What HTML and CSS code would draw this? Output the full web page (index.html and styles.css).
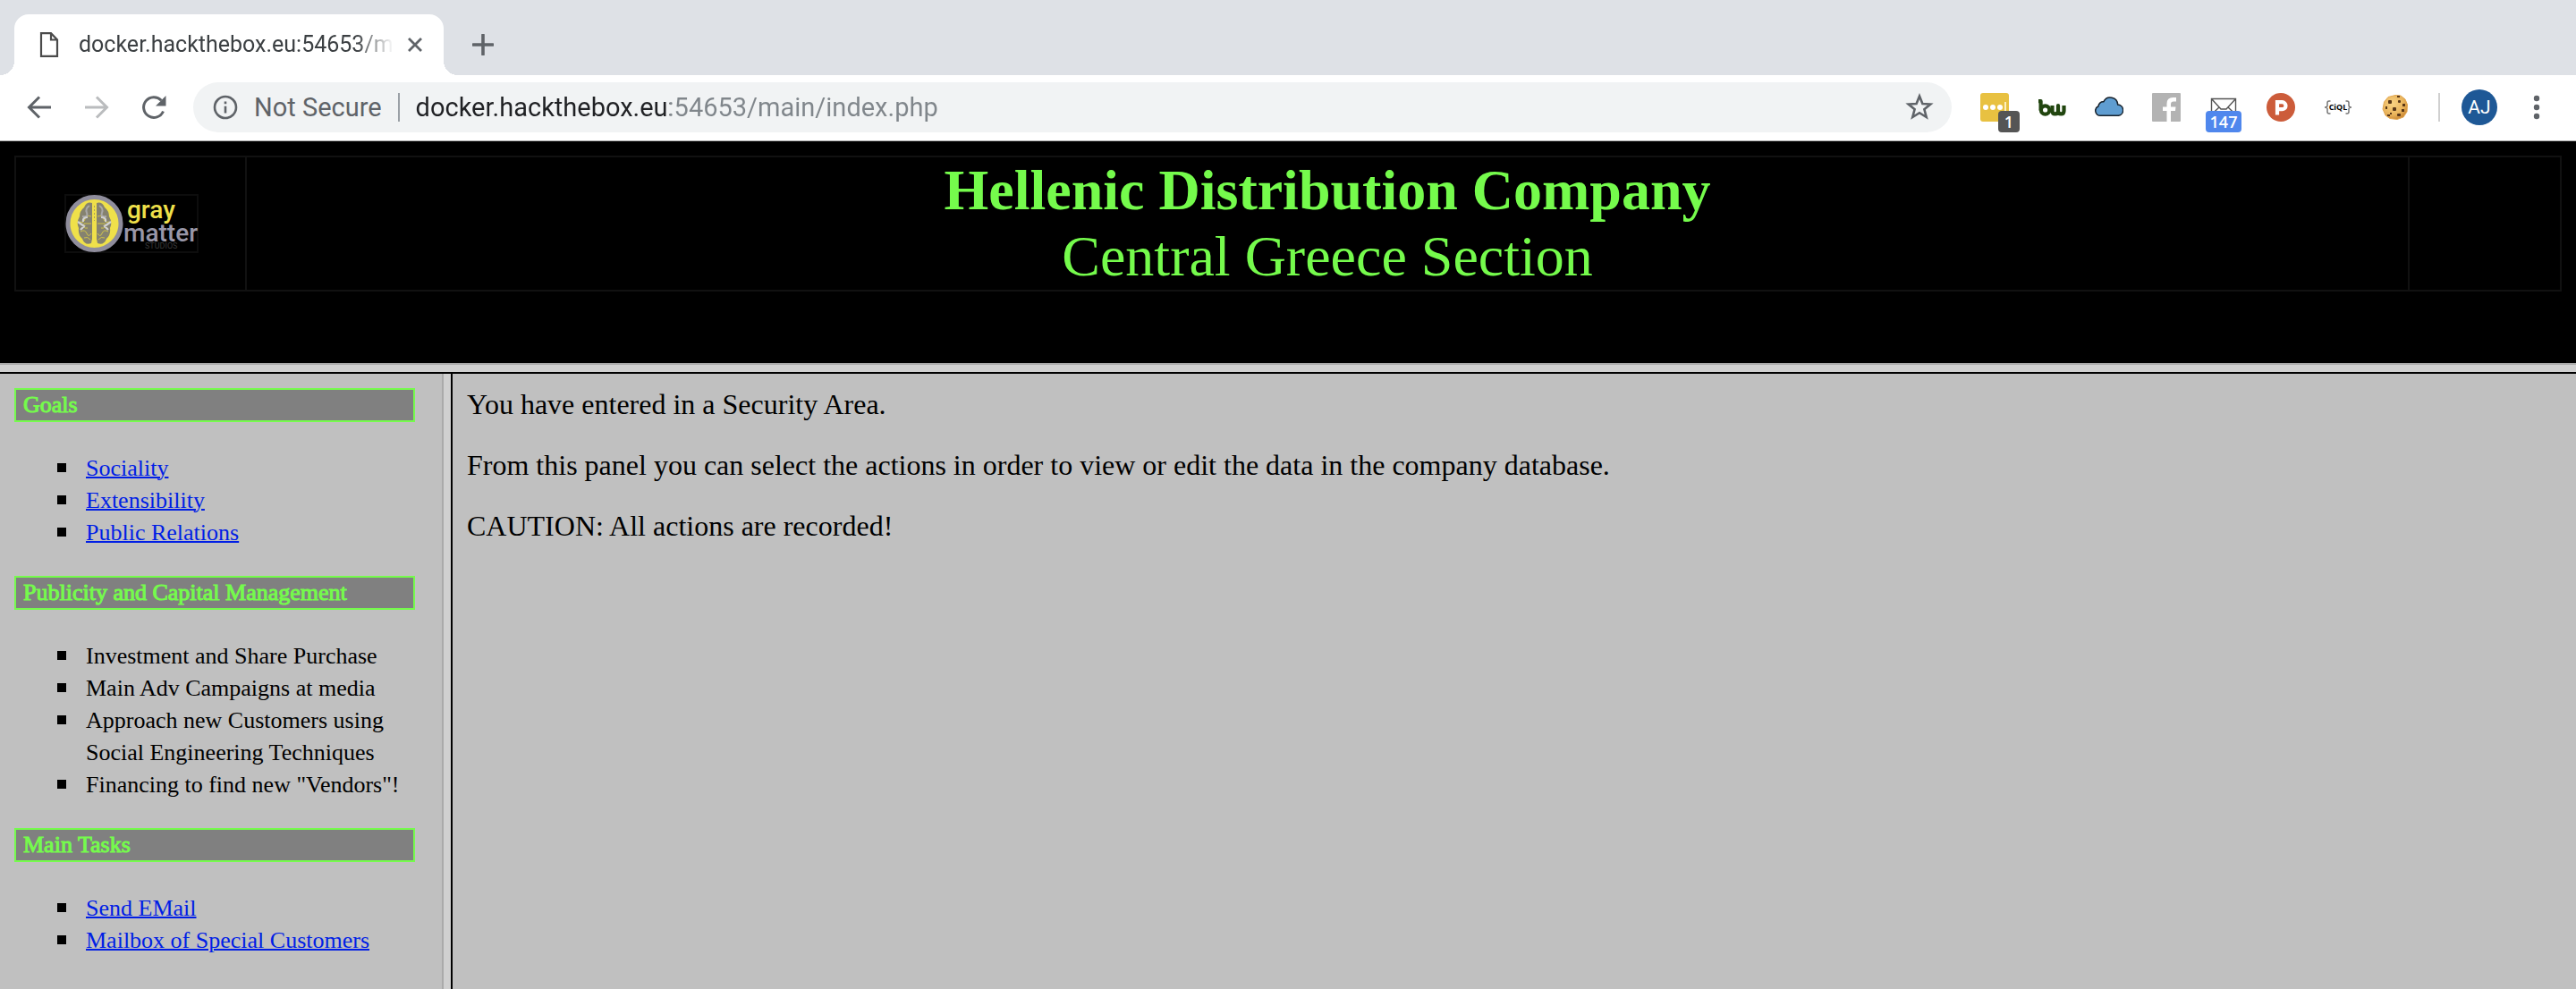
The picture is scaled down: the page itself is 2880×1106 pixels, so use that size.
FILE: index.html
```
<!DOCTYPE html>
<html lang="en">
<head>
<meta charset="utf-8">
<title>docker.hackthebox.eu:54653/main/index.php</title>
<link rel="stylesheet" href="styles.css">
</head>
<body>
<header class="browser">
  <div class="tabs">
    <div class="tab">
      <svg class="page-icon" viewBox="0 0 22 28" width="22" height="28"><path d="M2 1.200H13L20 8.500V26.800H2Z M13 1.200V8.500H20" fill="none" stroke="#4a4a4a" stroke-width="2.200"/></svg>
      <span class="tab-title">docker.hackthebox.eu:54653/m</span>
      <button class="tool tab-close" aria-label="Close tab"><svg viewBox="0 0 16 16" width="16" height="16"><path d="M1 1L15 15M15 1L1 15" stroke="#5f6368" stroke-width="2.800"/></svg></button>
    </div>
    <button class="tool new-tab" aria-label="New tab"><svg viewBox="0 0 24 24" width="24" height="24"><path d="M12 1V23M1 12H23" stroke="#5f6368" stroke-width="3.600" stroke-linecap="round"/></svg></button>
  </div>
  <div class="toolbar">
    <nav class="nav">
      <button class="tool" aria-label="Back"><svg viewBox="0 0 32 32" width="32" height="32"><path d="M29 16H5M16 4.500L4.500 16L16 27.500" fill="none" stroke="#5f6368" stroke-width="3"/></svg></button>
      <button class="tool" aria-label="Forward"><svg viewBox="0 0 32 32" width="32" height="32"><path d="M3 16H27M16 4.500L27.500 16L16 27.500" fill="none" stroke="#babcbe" stroke-width="3"/></svg></button>
      <button class="tool" aria-label="Reload"><svg viewBox="0 0 32 32" width="32" height="32"><path d="M26.500 20.500A11.400 11.400 0 1 1 24.300 8.200" fill="none" stroke="#5f6368" stroke-width="3"/><path d="M29.500 3V14.500H18Z" fill="#5f6368"/></svg></button>
    </nav>
    <div class="omnibox">
      <svg class="info" viewBox="0 0 28 28" width="28" height="28"><circle cx="14" cy="14" r="12" fill="none" stroke="#5f6368" stroke-width="2.600"/><path d="M12.700 12.700H15.300V20.500H12.700ZM12.700 7.500H15.300V10.200H12.700Z" fill="#5f6368"/></svg>
      <span class="security">Not Secure</span>
      <input class="url" type="text" aria-label="Address" value="docker.hackthebox.eu:54653/main/index.php">
      <button class="tool" aria-label="Bookmark"><svg viewBox="0 0 32 32" width="32" height="32"><path d="M16 3.500L19.400 12L28.300 12.500L21.400 18.300L23.700 27L16 22.200L8.300 27L10.600 18.300L3.700 12.500L12.600 12Z" fill="none" stroke="#5f6368" stroke-width="2.600"/></svg></button>
    </div>
    <div class="extensions">
      <button class="tool ext" aria-label="Password manager"><svg viewBox="0 0 32 32" width="32" height="32"><rect width="32" height="32" rx="3" fill="#e8c141"/><circle cx="6" cy="16" r="3" fill="#fff"/><circle cx="14" cy="16" r="3" fill="#fff"/><circle cx="22" cy="16" r="3" fill="#fff"/><path d="M28 10V22" stroke="#fff6d0" stroke-width="1.800"/></svg><span class="badge">1</span></button>
      <button class="tool ext" aria-label="BuiltWith"><svg viewBox="0 0 32 32" width="32" height="32"><g fill="none" stroke="#21450f" stroke-width="4.200" stroke-linejoin="round"><path d="M1 9.200H3.600V19.500"/><circle cx="8.600" cy="19" r="4.700"/><path d="M16.500 14V20Q16.500 23.400 19.500 23.400Q23 23.400 23 20V14V20Q23 23.400 26.300 23.400Q29.500 23.400 29.500 20V14"/></g></svg></button>
      <button class="tool ext" aria-label="Cloud"><svg viewBox="0 0 32 32" width="32" height="32"><path d="M6.500 25.300A5.500 5.500 0 0 1 4 14.800A5.300 5.300 0 0 1 9.800 9.800A8.400 8.400 0 0 1 25.700 13A6.200 6.200 0 0 1 26.500 25.300Z" fill="#5f9dd1" stroke="#17212b" stroke-width="1.500"/></svg></button>
      <button class="tool ext" aria-label="Facebook"><svg viewBox="0 0 32 32" width="32" height="32"><rect width="32" height="32" rx="1" fill="#b3b3b3"/><path d="M16.500 32V20H12V15.500H16.500V12Q16.500 5 23.500 5H27V9.500H24Q21 9.500 21 12.500V15.500H26.500L26 20H21V32Z" fill="#fff"/></svg></button>
      <button class="tool ext" aria-label="Mail"><svg viewBox="0 0 32 32" width="32" height="32"><path d="M2.500 6.500H29.500V27H2.500ZM2.500 6.500L13 18H19L29.500 6.500M2.500 24L11 16M29.500 24L21 16" fill="none" stroke="#555" stroke-width="1.400"/></svg><span class="badge badge-blue">147</span></button>
      <button class="tool ext" aria-label="Product Hunt"><svg viewBox="0 0 32 32" width="32" height="32"><circle cx="16" cy="16" r="16" fill="#cc5c3a"/><path d="M12 24.500V10.200H17.500A4 4 0 0 1 17.500 18.200H12" fill="none" stroke="#fff" stroke-width="4.200"/></svg></button>
      <button class="tool ext" aria-label="CiQL"><svg viewBox="0 0 32 32" width="32" height="32"><path d="M7.500 9H6Q4 9 4 11V14Q4 16 1 16Q4 16 4 18V21Q4 23 6 23H7.500M24.500 9H26Q28 9 28 11V14Q28 16 31 16Q28 16 28 18V21Q28 23 26 23H24.500" fill="none" stroke="#777" stroke-width="1.500"/><text x="16" y="19" text-anchor="middle" class="ciql">CiQL</text></svg></button>
      <button class="tool ext" aria-label="Cookies"><svg viewBox="0 0 32 32" width="32" height="32"><defs><radialGradient id="cookie" cx=".4" cy=".35" r=".7"><stop offset="0" stop-color="#f8d283"/><stop offset=".65" stop-color="#e9b45c"/><stop offset="1" stop-color="#c98430"/></radialGradient></defs><path d="M16 2.500L22 3L27 7L29.500 13L29 21L25 27L18 29.500L10 28.500L5 25L2 18L3.500 10L8 4.500Z" fill="url(#cookie)" stroke="#e2a853" stroke-linejoin="round"/><g fill="#593718"><rect x="8" y="8" width="4" height="4" rx="1"/><rect x="18" y="3" width="3" height="2"/><rect x="19" y="8" width="3" height="3" rx="1"/><rect x="24" y="12" width="3" height="3"/><rect x="13" y="16" width="4" height="4" rx="1"/><rect x="5" y="15" width="2" height="3"/><rect x="23" y="18" width="3" height="3"/><rect x="18" y="23" width="4" height="3" rx="1"/><rect x="7" y="24" width="3" height="2"/><rect x="10" y="22" width="2" height="2"/></g></svg></button>
    </div>
    <button class="avatar">AJ</button>
    <button class="tool" aria-label="Menu"><svg viewBox="0 0 8 32" width="8" height="32"><g fill="#5f6368"><circle cx="4" cy="6" r="3.200"/><circle cx="4" cy="16" r="3.200"/><circle cx="4" cy="26" r="3.200"/></g></svg></button>
  </div>
</header>
<main class="page">
  <section class="banner">
    <div class="banner-grid">
      <div class="logo-cell">
        <svg viewBox="0 0 150 66" width="150" height="66" role="img" aria-label="Gray Matter Studios">
          <rect x="1" y="1" width="148" height="64" fill="#000" stroke="#0d0d0d" stroke-width="2"/>
          <circle cx="33.500" cy="33" r="29.500" fill="#efe04a" stroke="#8f8d9c" stroke-width="5"/>
          <path d="M31 10Q25 8 22 15Q17 19 17 25Q13 32 16 38Q15 46 20 50Q23 58 30 55L31 50ZM36 10Q42 8 45 15Q50 19 50 25Q54 32 51 38Q52 46 47 50Q44 58 37 55L36 50Z" fill="#85826f"/>
          <g fill="none" stroke="#d0c34b" stroke-width="1"><path d="M30 25Q24 23 23 28T17 31M30 33H22Q20 39 26 38M18 42Q23 39 25 44T30 44M22 49Q26 47 29 51M37 25Q43 23 44 28T50 31M37 33H45Q47 39 41 38M49 42Q44 39 42 44T37 44M45 49Q41 47 38 51"/></g>
          <g fill="none" stroke="#a9a8a8" stroke-width="2"><path d="M28 13Q23 16 25 21T20 25M39 13Q44 16 42 21T47 25"/></g>
          <g fill="none" stroke="#d2d2d2" stroke-width="2.200"><path d="M15 31L22 36L18 40M52 31L45 36L49 40M26 26Q20 26 21 31M41 26Q47 26 46 31"/></g>
          <path d="M33.500 9V58" stroke="#efe04a" stroke-width="5"/>
          <path d="M33.500 13V30" stroke="#a9a05a" stroke-width="1" stroke-dasharray="2 2"/>
          <text x="70" y="27" class="logo-gray">gray</text>
          <text x="66" y="53" class="logo-matter">matter</text>
          <text x="90" y="61" class="logo-studios">STUDIOS</text>
        </svg>
      </div>
      <div class="title-cell">
        <h1 class="title">Hellenic Distribution Company</h1>
        <p class="subtitle">Central Greece Section</p>
      </div>
      <div class="end-cell"></div>
    </div>
  </section>
  <div class="divider"></div>
  <div class="frames">
    <aside class="sidebar">
      <h2 class="heading">Goals</h2>
      <ul class="list">
        <li><a href="#">Sociality</a></li>
        <li><a href="#">Extensibility</a></li>
        <li><a href="#">Public Relations</a></li>
      </ul>
      <h2 class="heading">Publicity and Capital Management</h2>
      <ul class="list">
        <li><span>Investment and Share Purchase</span></li>
        <li><span>Main Adv Campaigns at media</span></li>
        <li><span>Approach new Customers using Social Engineering Techniques</span></li>
        <li><span>Financing to find new "Vendors"!</span></li>
      </ul>
      <h2 class="heading">Main Tasks</h2>
      <ul class="list">
        <li><a href="#">Send EMail</a></li>
        <li><a href="#">Mailbox of Special Customers</a></li>
      </ul>
    </aside>
    <div class="splitter"></div>
    <article class="content">
      <p>You have entered in a Security Area.</p>
      <p>From this panel you can select the actions in order to view or edit the data in the company database.</p>
      <p>CAUTION: All actions are recorded!</p>
    </article>
  </div>
</main>
</body>
</html>
```
FILE: styles.css
```
* { box-sizing: border-box; }
body {
  margin: 0;
  min-height: 100vh;
  display: flex;
  flex-direction: column;
  font-family: "Liberation Serif", serif;
  background: #c0c0c0;
  color: #000;
}
svg { display: block; }

/* Browser window */
.browser { font-family: Roboto, sans-serif; background: #dee1e6; }
.tool {
  display: block;
  flex: none;
  margin: 0;
  padding: 0;
  border: 0;
  background: none;
}
.tabs { display: flex; align-items: center; gap: 32px; padding: 16px 16px 0; }
.tab {
  position: relative;
  display: flex;
  align-items: center;
  width: 480px;
  height: 68px;
  padding: 0 24px 0 28px;
  background: #fff;
  border-radius: 16px 16px 0 0;
}
.tab::before, .tab::after {
  content: "";
  position: absolute;
  bottom: 0;
  width: 16px;
  height: 16px;
}
.tab::before { left: -16px; background: radial-gradient(circle at 0 0, transparent 16px, #fff 16px); }
.tab::after { right: -16px; background: radial-gradient(circle at 100% 0, transparent 16px, #fff 16px); }
.page-icon { flex: none; margin-right: 22px; }
.tab-title {
  flex: 1;
  min-width: 0;
  overflow: hidden;
  white-space: nowrap;
  font-size: 25px;
  line-height: 32px;
  color: #3c4043;
  -webkit-mask-image: linear-gradient(90deg, #000 310px, transparent 352px);
  mask-image: linear-gradient(90deg, #000 310px, transparent 352px);
}
.tab-close { margin-left: 16px; }
.toolbar {
  display: flex;
  align-items: center;
  height: 74px;
  padding: 0 40px 2px 28px;
  background: #fff;
  border-bottom: 1px solid #b0b0b0;
}
.nav { display: flex; gap: 32px; margin-right: 28px; }
.omnibox {
  flex: 1;
  display: flex;
  align-items: center;
  height: 56px;
  padding: 0 20px 0 22px;
  border-radius: 28px;
  background: #f1f3f4;
  font-size: 29px;
}
.info { flex: none; }
.security {
  margin-left: 18px;
  padding-right: 18px;
  border-right: 2px solid #9aa0a6;
  line-height: 32px;
  color: #5f6368;
}
.url {
  flex: 1;
  min-width: 0;
  height: 40px;
  margin-left: 18px;
  padding: 0;
  border: 0;
  font: inherit;
  color: transparent;
  background: linear-gradient(90deg, #202124 284px, #80868b 284px);
  -webkit-background-clip: text;
  background-clip: text;
}
.extensions {
  display: flex;
  gap: 32px;
  margin-left: 32px;
  padding-right: 32px;
  border-right: 2px solid #d0d0d0;
}
.ext { position: relative; }
.badge {
  position: absolute;
  top: 20px;
  left: 20px;
  min-width: 24px;
  padding: 0 4px;
  border-radius: 4px;
  background: #555;
  color: #fff;
  font: 600 18px/24px "Open Sans", sans-serif;
  text-align: center;
}
.badge-blue { left: -4px; min-width: 40px; background: #4f87ed; }
.ciql { font: bold 9px "Open Sans", sans-serif; }
.avatar {
  flex: none;
  width: 40px;
  height: 40px;
  margin: 0 40px 0 24px;
  padding: 0;
  border: 0;
  border-radius: 50%;
  background: #1e5896;
  color: #fff;
  font: 21px/40px Roboto, sans-serif;
}

/* Banner frame */
.page { flex: 1; display: flex; flex-direction: column; }
.banner { padding: 16px 16px 80px; background: #000; color: #75fb4c; }
.banner-grid {
  display: grid;
  grid-template-columns: 258px 1fr 170px;
  border: 2px solid #111;
}
.logo-cell { display: flex; align-items: center; padding-left: 54px; border-right: 2px solid #111; }
.title-cell { text-align: center; font-size: 64px; line-height: 74px; }
.end-cell { border-left: 2px solid #111; }
.title, .subtitle { margin: 0; font-size: inherit; }
.logo-gray, .logo-matter { font: 500 28px Roboto, sans-serif; }
.logo-gray { fill: #efe04a; }
.logo-matter { fill: #9997a8; }
.logo-studios { font: 9px Roboto, sans-serif; fill: #383838; }

/* Lower frames */
.divider { height: 12px; border-top: 2px solid #aaa; border-bottom: 2px solid #000; background: #d0d0d0; }
.frames { flex: 1; display: flex; }
.sidebar { flex: none; width: 494px; padding: 16px 30px 0 16px; font-size: 26px; }
.splitter { flex: none; width: 12px; border-left: 2px solid #aaa; border-right: 2px solid #000; background: #d0d0d0; }
.content { flex: 1; padding: 16px; font-size: 32px; line-height: 36px; }
.content p { margin: 0 0 32px; }
.heading {
  margin: 0;
  padding: 0 8px;
  border: 2px solid #75fb4c;
  background: #808080;
  color: #75fb4c;
  font-size: inherit;
  font-weight: normal;
  line-height: 34px;
  -webkit-text-stroke: 1px #75fb4c;
}
.list { margin: 34px 0 30px; padding: 0 0 0 48px; list-style: none; line-height: 36px; }
.list li { display: flex; gap: 22px; }
.list li::before { content: ""; flex: none; width: 10px; height: 10px; margin-top: 12px; background: #000; }
.list a { color: #001ee5; text-decoration-thickness: 2px; }
```
